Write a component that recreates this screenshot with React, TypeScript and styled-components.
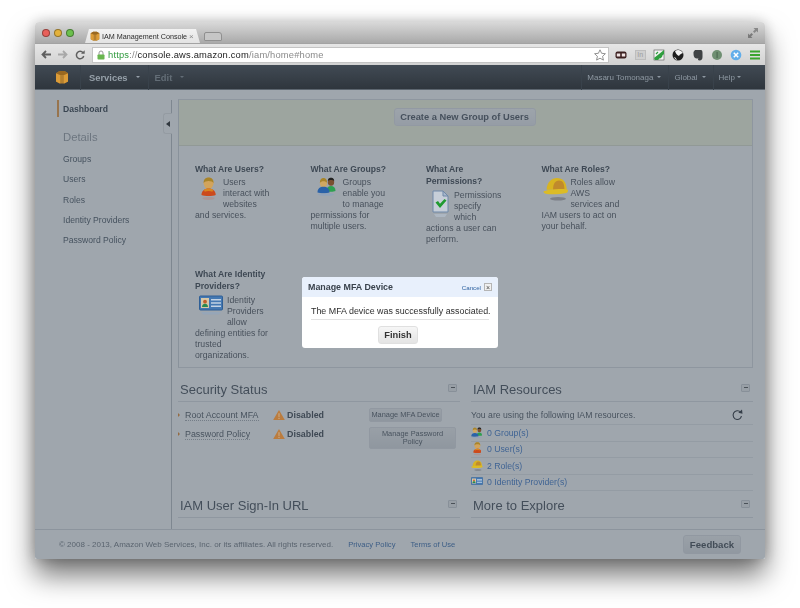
import React from "react";
import styled, { createGlobalStyle, css } from "styled-components";

const GlobalStyle = createGlobalStyle`
  html, body {
    margin: 0;
    padding: 0;
    background: #fff;
    overflow: hidden;
  }
  body {
    font-family: "Liberation Sans", Arial, sans-serif;
  }
`;

// the colour pictures stay saturated under the dim layer in the screenshot
const aboveDim = css`
  position: relative;
  z-index: 2;
`;

const Desktop = styled.div`
  width: 800px;
  height: 608px;
  padding: 22px 35px 0;
  box-sizing: border-box;
  background: #fff;
`;

const Window = styled.div`
  width: 730px;
  height: 537px;
  display: flex;
  flex-direction: column;
  border-radius: 4px 4px 2px 2px;
  overflow: hidden;
  box-shadow: 0 16px 28px rgba(0, 0, 0, 0.55), 0 0 14px rgba(0, 0, 0, 0.22);
  filter: blur(0.3px);
`;

/* browser chrome */
const TitleBar = styled.div`
  height: 21px;
  flex: none;
  display: flex;
  align-items: flex-end;
  padding: 0 7px 0 7px;
  background: linear-gradient(#d9d9d9, #a9a9a9);
`;

const Light = styled.span<{ $color: string }>`
  width: 8px;
  height: 8px;
  margin-right: 4px;
  box-sizing: border-box;
  border-radius: 50%;
  border: 0.5px solid rgba(0, 0, 0, 0.35);
  background: ${({ $color }) => $color};
`;

const Lights = styled.div`
  display: flex;
  align-self: center;
  margin-left: 0;
  margin-right: 7px;
`;

const Tab = styled.div`
  width: 115px;
  height: 14px;
  display: flex;
  align-items: center;
  gap: 2px;
  padding: 0 5px 0 5px;
  box-sizing: border-box;
  clip-path: polygon(0 100%, 4px 0, calc(100% - 4px) 0, 100% 100%);
  background: linear-gradient(#f2f2f2, #e3e3e3);
  font-size: 7.2px;
  color: #2c2c2c;
  white-space: nowrap;
  svg {
    flex: none;
  }
`;

const TabClose = styled.span`
  margin-left: auto;
  margin-right: 3px;
  font-size: 8px;
  color: #888;
`;

const NewTab = styled.div`
  width: 18px;
  height: 9px;
  margin: 0 0 2px 4px;
  border: 1px solid #8f8f8f;
  border-radius: 2px 3px 1px 1px;
  background: #c6c6c6;
  box-sizing: border-box;
`;

const FullScreen = styled.div`
  margin-left: auto;
  align-self: flex-start;
  margin-top: 6px;
  display: flex;
`;

const Toolbar = styled.div`
  height: 22px;
  flex: none;
  display: flex;
  align-items: center;
  padding: 0 4px 0 2px;
  box-sizing: border-box;
  background: linear-gradient(#e6e6e6, #d2d2d2);
  border-top: 1px solid #a3a3a3;
`;

const ToolButton = styled.div`
  width: 17px;
  display: flex;
  justify-content: center;
  flex: none;
`;

const AddressBar = styled.div`
  width: 517px;
  height: 16px;
  margin-left: 4px;
  margin-right: 3px;
  display: flex;
  align-items: center;
  gap: 3px;
  padding: 0 2px 0 4px;
  box-sizing: border-box;
  background: #fff;
  border: 1px solid #c4c4c4;
  flex: none;
  font-size: 9.35px;
  letter-spacing: 0.18px;
`;

const Url = styled.span`
  color: #8a8a8a;
  white-space: nowrap;
  b {
    font-weight: 400;
    color: #222;
  }
  i {
    font-style: normal;
    color: #2f9a3d;
  }
`;

const StarSlot = styled.span`
  margin-left: auto;
  display: flex;
`;

const Extensions = styled.div`
  flex: 1;
  display: flex;
  justify-content: space-between;
  align-items: center;
  padding: 0 0 0 3px;
`;

const Extension = styled.div`
  width: 12px;
  height: 12px;
  display: flex;
  align-items: center;
  justify-content: center;
  font-size: 7px;
  color: #9c9c9c;
`;

/* AWS nav */
const NavBar = styled.div`
  height: 25px;
  flex: none;
  display: flex;
  align-items: center;
  padding: 0 17px 0 20px;
  box-sizing: border-box;
  background: linear-gradient(#414a54, #2f363d);
  border-bottom: 1px solid #5d666f;
`;

const NavLogo = styled.div`
  width: 25px;
  display: flex;
`;

const NavItem = styled.div<{ $bold?: boolean; $faint?: boolean; $gap?: number; $pad?: string }>`
  height: 25px;
  display: flex;
  align-items: center;
  gap: ${({ $gap }) => $gap ?? 4}px;
  padding: ${({ $pad }) => $pad ?? "0 7px 0 5px"};
  border-left: 1px solid #39424b;
  font-size: ${({ $bold }) => ($bold ? 9.4 : 8)}px;
  font-weight: ${({ $bold }) => ($bold ? 700 : 400)};
  color: ${({ $faint, $bold }) => ($faint ? "#636d76" : $bold ? "#96a0a9" : "#8e98a2")};
  white-space: nowrap;
`;

const Caret = styled.span`
  width: 0;
  height: 0;
  border-left: 2.5px solid transparent;
  border-right: 2.5px solid transparent;
  border-top: 2.5px solid currentColor;
`;

const NavRight = styled.div`
  margin-left: auto;
  display: flex;
`;

/* dimmed page */
const Page = styled.div`
  position: relative;
  flex: 1;
  min-height: 0;
  display: flex;
  flex-direction: column;
  background: #fff;
`;

const Overlay = styled.div`
  position: absolute;
  inset: 0;
  z-index: 1;
  display: flex;
  justify-content: center;
  align-items: flex-start;
  padding-top: 187px;
  background: rgba(64, 77, 92, 0.5);
`;

const Modal = styled.div`
  width: 196px;
  height: 71px;
  border-radius: 3px;
  background: #fff;
  overflow: hidden;
  display: flex;
  flex-direction: column;
`;

const ModalHead = styled.div`
  height: 20px;
  flex: none;
  display: flex;
  align-items: center;
  padding: 0 6px;
  background: #e8f0fc;
  font-size: 8.9px;
  font-weight: 700;
  color: #39424c;
`;

const ModalCancel = styled.span`
  margin-left: auto;
  font-size: 6.2px;
  font-weight: 400;
  color: #2b5f9e;
`;

const ModalClose = styled.span`
  width: 8px;
  height: 8px;
  margin-left: 3px;
  border: 0.5px solid #b5b5b5;
  background: #f0f0f0;
  box-sizing: border-box;
  display: flex;
  align-items: center;
  justify-content: center;
  font-size: 7px;
  font-weight: 400;
  line-height: 1;
  color: #444;
`;

const ModalText = styled.div`
  margin: 0 9px;
  padding: 9px 0 2px;
  text-align: center;
  font-size: 8.9px;
  line-height: 11px;
  color: #2e2e2e;
  white-space: nowrap;
  border-bottom: 1px solid #e2e2e2;
`;

const FinishButton = styled.div`
  align-self: center;
  width: 40px;
  height: 18px;
  margin: 6px 4px 0 0;
  display: flex;
  align-items: center;
  justify-content: center;
  border-radius: 3px;
  background: linear-gradient(#f6f6f6, #e4e4e4);
  border: 1px solid #e0e0e0;
  box-sizing: border-box;
  font-size: 9.3px;
  font-weight: 700;
  color: #333;
`;

const Body = styled.div`
  flex: 1;
  min-height: 0;
  display: flex;
`;

const Sidebar = styled.div`
  position: relative;
  width: 137px;
  flex: none;
  box-sizing: border-box;
  margin-top: 10px;
  padding: 0 0 0 22px;
  border-right: 1px solid #bcc0c4;
`;

const Collapse = styled.div`
  position: absolute;
  right: -1px;
  top: 13px;
  width: 9px;
  height: 21px;
  display: flex;
  align-items: center;
  justify-content: center;
  border-radius: 3px 0 0 3px;
  background: #fff;
  border: 1px solid #e9e9e9;
  border-right: none;
  box-sizing: border-box;
  &::before {
    content: "";
    border-top: 3px solid transparent;
    border-bottom: 3px solid transparent;
    border-right: 4px solid #222;
  }
`;

const SideActive = styled.div`
  height: 17px;
  display: flex;
  align-items: center;
  padding-left: 4px;
  border-left: 2px solid #f09a3e;
  font-size: 8.6px;
  font-weight: 700;
  color: #333c46;
`;

const SideHeading = styled.div`
  margin: 13px 0 5px 6px;
  font-size: 11.3px;
  line-height: 14px;
  color: #9a9ea4;
`;

const SideLink = styled.div`
  height: 20.3px;
  display: flex;
  align-items: center;
  margin-left: 6px;
  font-size: 8.6px;
  color: #4a5560;
`;

const Content = styled.div`
  flex: 1;
  min-width: 0;
  padding: 9px 12px 0 6px;
  overflow: hidden;
`;

const Panel = styled.div`
  height: 269px;
  box-sizing: border-box;
  border: 1px solid #dcdfe3;
  border-left-color: #d3d6da;
  background: #fff;
`;

const Band = styled.div`
  height: 46px;
  display: flex;
  justify-content: center;
  padding: 8px 2px 0 0;
  box-sizing: border-box;
  background: #fbfde3;
  border-bottom: 1px solid #e3e5d0;
`;

const CreateButton = styled.div`
  width: 142px;
  height: 18px;
  display: flex;
  align-items: center;
  justify-content: center;
  border-radius: 3px;
  background: linear-gradient(#fafafa, #ececf0);
  border: 1px solid #e4e4ea;
  box-sizing: border-box;
  font-size: 9.3px;
  font-weight: 700;
  color: #4c535d;
`;

const Topics = styled.div`
  display: grid;
  grid-template-columns: repeat(4, 115.5px);
  grid-auto-rows: 105px;
  padding: 17px 0 0 16px;
`;

const Topic = styled.div<{ $width: number }>`
  width: ${({ $width }) => $width}px;
  font-size: 8.7px;
  line-height: 11px;
  color: #4f535b;
`;

const TopicTitle = styled.div`
  font-size: 8.6px;
  font-weight: 700;
  line-height: 12.4px;
  width: 110px;
  margin-bottom: 2px;
  color: #3c434c;
  white-space: pre-line;
`;

const TopicIcon = styled.div<{ $w: number }>`
  ${aboveDim}
  float: left;
  width: ${({ $w }) => $w}px;
  height: 33px;
  display: flex;
  justify-content: center;
`;

const Sections = styled.div`
  display: grid;
  grid-template-columns: 282px 282px;
  grid-template-rows: 116px auto;
  column-gap: 11px;
  margin-top: 10px;
`;

const SectionHead = styled.div`
  height: 24px;
  display: flex;
  align-items: center;
  padding: 1px 3px 1px 2px;
  box-sizing: border-box;
  border-bottom: 1px solid #dfe1e4;
  font-size: 13px;
  color: #474e58;
`;

const Minus = styled.span`
  margin-left: auto;
  margin-top: -4px;
  width: 9px;
  height: 8px;
  display: flex;
  align-items: center;
  justify-content: center;
  border-radius: 1px;
  border: 1px solid #d0d3d7;
  box-sizing: border-box;
  background: #f0f0f0;
  &::before {
    content: "";
    width: 4px;
    height: 1px;
    background: #555;
  }
`;

const StatusGrid = styled.div`
  display: grid;
  grid-template-columns: 95px 96px 1fr;
  row-gap: 5px;
  padding-top: 6px;
  font-size: 8.9px;
`;

const StatusLabel = styled.div`
  height: 14px;
  display: flex;
  align-items: center;
  gap: 5px;
  color: #505760;
  &::before {
    content: "";
    border-top: 2px solid transparent;
    border-bottom: 2px solid transparent;
    border-left: 2.5px solid #e9892b;
  }
  span {
    border-bottom: 1px dotted #a8adb3;
    white-space: nowrap;
  }
`;

const StatusValue = styled.div`
  height: 14px;
  display: flex;
  align-items: center;
  gap: 2px;
  font-weight: 700;
  color: #3c434c;
  svg {
    ${aboveDim}
  }
`;

const StatusButton = styled.div<{ $w: number }>`
  width: ${({ $w }) => $w}px;
  padding: 1.5px 8px;
  min-height: 14px;
  display: flex;
  align-items: center;
  justify-content: center;
  box-sizing: border-box;
  text-align: center;
  border-radius: 2px;
  background: linear-gradient(#f2f2f2, #dfe0e3);
  border: 1px solid #e2e3e6;
  font-size: 7.4px;
  line-height: 8.5px;
  color: #505760;
`;

const SingleLine = styled.span`
  margin: 0 -8px;
  white-space: nowrap;
`;

const ResourceIntro = styled.div`
  height: 23px;
  display: flex;
  align-items: center;
  justify-content: space-between;
  padding: 3px 10px 0 0;
  box-sizing: border-box;
  border-bottom: 1px solid #e8eaec;
  font-size: 8.7px;
  color: #505760;
`;

const ResourceRow = styled.div`
  height: 16.5px;
  display: flex;
  align-items: center;
  gap: 4px;
  box-sizing: border-box;
  border-bottom: 1px solid #e8eaec;
  font-size: 8.7px;
  color: #3f79cb;
`;

const RowIcon = styled.span`
  ${aboveDim}
  width: 12px;
  display: flex;
  justify-content: center;
  flex: none;
`;

const Footer = styled.div`
  height: 30px;
  flex: none;
  display: flex;
  align-items: center;
  padding: 0 24px;
  box-sizing: border-box;
  border-top: 1px solid #d8dbdf;
  font-size: 8px;
  color: #737981;
  white-space: nowrap;
`;

const FooterLink = styled.span`
  margin-left: 15px;
  font-size: 7.6px;
  color: #3a6daf;
`;

const Feedback = styled.div`
  margin-left: auto;
  width: 58px;
  height: 19px;
  display: flex;
  align-items: center;
  justify-content: center;
  border-radius: 3px;
  background: linear-gradient(#f4f4f4, #e2e3e6);
  border: 1px solid #e2e3e6;
  box-sizing: border-box;
  font-size: 9.6px;
  font-weight: 700;
  color: #444a52;
`;

/* drawings */
const Cube = ({ size }: { size: number }) => (
  <svg width={size} height={size} viewBox="0 0 14 14">
    <path d="M1 3.2 4.500 1h5L13 3.200v8.300L9.500 13.500h-5L1 11.500z" fill="#b5802f" />
    <path d="M1 3.200 5.200 5v8.400L1 11.500zM13 3.200 8.800 5v8.400l4.200-1.900z" fill="#dc9c38" />
    <path d="M4.500 1h5L13 3.200 8.800 5H5.200L1 3.200z" fill="#9a6820" />
  </svg>
);

const Person = ({ size }: { size: number }) => (
  <svg width={size * 0.8} height={size * 1.25} viewBox="0 0 16 25">
    <ellipse cx="8" cy="6.500" rx="5.200" ry="6" fill="#d2a45c" />
    <path d="M2.800 6.500C2.600 1.200 6 .4 8 .4s5.400.8 5.200 6.100C12 3.400 4 3.400 2.800 6.500z" fill="#a8842a" />
    <path d="M.5 19c0-4.500 3.500-6.800 7.500-6.800s7.500 2.300 7.500 6.800c-3 1.400-12 1.400-15 0z" fill="#cc4a1c" />
    <path d="M3 13.500c2.500-1.700 7.500-1.700 10 0l-1 2c-2-1-6-1-8 0z" fill="#d9851f" />
    <ellipse cx="8" cy="22.500" rx="6.500" ry="1.600" fill="#b0908c" opacity="0.7" />
  </svg>
);

const Group = ({ size }: { size: number }) => (
  <svg width={size} height={size * 0.95} viewBox="0 0 20 19">
    <ellipse cx="14" cy="5" rx="3.200" ry="3.800" fill="#7a5030" />
    <path d="M10.800 4C11 1 13 .8 14 .8s3.200.5 3.200 3.200c-1.400-1.300-5-1.300-6.400 0z" fill="#222" />
    <path d="M9.500 14c0-3.400 1.800-5 4.500-5s4.500 1.600 4.500 5c-2 1-7 1-9 0z" fill="#2ea050" />
    <ellipse cx="6.500" cy="6" rx="3.600" ry="4.200" fill="#cfa862" />
    <path d="M2.900 6C2.800 2 5 1 6.500 1s3.700 1 3.600 5C9 3.800 4 3.800 2.900 6z" fill="#a8852a" />
    <path d="M.5 15.500c0-4 2.500-5.700 6-5.700s6 1.700 6 5.700c-2.500 1-9.500 1-12 0z" fill="#2a62a8" />
    <ellipse cx="9" cy="17.500" rx="8" ry="1.300" fill="#8fa2bc" opacity="0.8" />
  </svg>
);

const Permission = () => (
  <svg width="17" height="28" viewBox="0 0 17 28">
    <path d="M1 1h10l5 5v16H1z" fill="#c6ced8" stroke="#6f88a8" />
    <path d="M11 1v5h5z" fill="#a8b8cc" stroke="#6f88a8" />
    <path d="M3.500 12.500 6 11l2 2.800L12.500 9l2 1.500L8 18z" fill="#1f9a30" />
    <path d="M2 24h13l-2 3H4z" fill="#b4bfca" opacity="0.7" />
  </svg>
);

const Hat = ({ size }: { size: number }) => (
  <svg width={size} height={size * 0.95} viewBox="0 0 26 25">
    <path d="M3.500 13C3.500 5.500 8.500 1 14 1s9.800 3.500 9.800 12z" fill="#d8b422" />
    <path d="M10 13C10 7 12 3.500 16 3.500s5.500 3 5.500 9.500z" fill="#c08a2c" />
    <path d="M.5 14.500C4 12.500 22 11 25 13c.7 1.500-.5 3-1.500 3.300-6 1.200-16 1.700-21 .700C.900 16.500.2 15.500.5 14.500z" fill="#dcbc26" />
    <ellipse cx="15" cy="22" rx="8" ry="1.800" fill="#73777e" opacity="0.8" />
  </svg>
);

const IdCard = ({ w, h }: { w: number; h: number }) => (
  <svg width={w} height={h} viewBox="0 0 24 20">
    <rect x="0.500" y="1" width="23" height="14" rx="1" fill="#4478b2" stroke="#2f5f96" />
    <rect x="2" y="3" width="8" height="10" fill="#d8c8a8" />
    <circle cx="6" cy="6.700" r="1.900" fill="#c2602a" />
    <path d="M3 12c0-2.500 1.500-3.300 3-3.300s3 .8 3 3.300z" fill="#2a8a50" />
    <path d="M12 4h10v1.500H12zM12 7.200h10v1.500H12zM12 10.400h10v1.500H12z" fill="#c2d2e4" />
    <path d="M2 17h20l-2 2.500H4z" fill="#93a6bc" opacity="0.7" />
  </svg>
);

const Warning = () => (
  <svg width="12" height="12" viewBox="0 0 13 12">
    <path d="M6.500.5 12.800 11.500H.2z" fill="#bb7c3e" />
    <path d="M6 4h1l-.1 4.500h-.8zM6 9.200h1v1H6z" fill="#d8c8b0" opacity="0.8" />
  </svg>
);

const Refresh = () => (
  <svg width="12" height="12" viewBox="0 0 12 12" fill="none">
    <path d="M9.800 3.200A4.400 4.400 0 1 0 6 10.500 4.400 4.400 0 0 0 10.400 7" stroke="#2b2f36" strokeWidth="1.100" />
    <path d="M7.300 3.800 11.500 4.800 11 .6z" fill="#2b2f36" />
  </svg>
);

const Lock = () => (
  <svg width="8" height="10" viewBox="0 0 8 10">
    <path d="M2 5V3a2 2 0 0 1 4 0v2" fill="none" stroke="#9a9a9a" />
    <rect x="0.500" y="4.500" width="7" height="5" rx="0.800" fill="#69b64f" />
  </svg>
);

const Star = () => (
  <svg width="12" height="12" viewBox="0 0 12 12">
    <path d="M6 .8 7.600 4.300l3.800.4-2.800 2.600.8 3.800L6 9.200l-3.400 1.900.8-3.800L.6 4.700l3.800-.4z" fill="#fff" stroke="#777" strokeWidth="0.800" />
  </svg>
);

const BackArrow = ({ color }: { color: string }) => (
  <svg width="10" height="9" viewBox="0 0 10 9" fill="none">
    <path d="M10 4.500H2M5 1 1.500 4.500 5 8" stroke={color} strokeWidth="1.800" />
  </svg>
);

const ForwardArrow = ({ color }: { color: string }) => (
  <svg width="10" height="9" viewBox="0 0 10 9" fill="none">
    <path d="M0 4.500h8M5 1l3.500 3.500L5 8" stroke={color} strokeWidth="1.800" />
  </svg>
);

const Reload = () => (
  <svg width="10" height="10" viewBox="0 0 10 10" fill="none">
    <path d="M8 2.700A3.700 3.700 0 1 0 8.700 6" stroke="#5f5f5f" strokeWidth="1.500" />
    <path d="M6 3.800h3.700V.2z" fill="#5f5f5f" />
  </svg>
);

const Expand = () => (
  <svg width="10" height="10" viewBox="0 0 10 10">
    <path d="M5.500 0H10v4.500L8.500 3 6.500 5 5 3.500 7 1.500z" fill="#888" />
    <path d="M0 10V5.500L1.500 7 3.500 5 5 6.500l-2 2L4.500 10z" fill="#7a7a7a" />
  </svg>
);

const Ghost = () => (
  <svg width="12" height="8" viewBox="0 0 12 8">
    <rect x="0.500" y="0.500" width="11" height="7" rx="2" fill="#3c2020" />
    <rect x="1.800" y="2.500" width="3.400" height="3" fill="#f0e4e4" />
    <rect x="6.800" y="2.500" width="3.400" height="3" fill="#f0e4e4" />
  </svg>
);

const Shield = () => (
  <svg width="12" height="12" viewBox="0 0 12 12">
    <rect x="1" y="1" width="10" height="10" fill="#f4f4f4" stroke="#555" strokeWidth="0.600" />
    <path d="M1 9 6 5l5-4v4L5 11H2z" fill="#2f9e3f" />
    <path d="M3 5 5 3M7 9l2-2" stroke="#2f9e3f" strokeWidth="1.200" />
  </svg>
);

const Globe = () => (
  <svg width="12" height="12" viewBox="0 0 12 12">
    <circle cx="6" cy="6" r="5.500" fill="#1e1e1e" />
    <path d="M3 2c3-2 6-1 8 2-2 1-3 1-4 3-2-1-3-2-4-5zM2 8c1 0 2 1 3 3-1 0-2-1-3-3z" fill="#f4f4f4" />
  </svg>
);

const Elephant = () => (
  <svg width="10" height="12" viewBox="0 0 10 12">
    <path d="M2 1h6c1 0 1.500 1 1.500 3v4c0 2-1 3.500-3 3.500-1.500 0-2-1-1-2H4C2 9.500.5 8 .5 5V3z" fill="#3f4244" />
  </svg>
);

const GreyDot = () => (
  <svg width="12" height="12" viewBox="0 0 12 12">
    <circle cx="6" cy="6" r="5" fill="#6f8f72" />
    <path d="M5.500 3h1.200v6H5.500z" fill="#4e6a52" />
  </svg>
);

const BlueDot = () => (
  <svg width="12" height="12" viewBox="0 0 12 12">
    <circle cx="6" cy="6" r="5.300" fill="#62aeea" />
    <path d="M3.800 3.800l4.400 4.400M8.200 3.800 3.800 8.200" stroke="#fff" strokeWidth="1.500" />
  </svg>
);

const Menu = () => (
  <svg width="10" height="10" viewBox="0 0 10 10">
    <path d="M0 .5h10v2H0zM0 4h10v2H0zM0 7.500h10v2H0z" fill="#3aa52f" />
  </svg>
);

const InBox = styled.span`
  width: 11px;
  height: 10px;
  display: flex;
  align-items: center;
  justify-content: center;
  border: 1px solid #bdbdbd;
  background: #cfcfcf;
  box-sizing: border-box;
`;

const topics = [
  { title: "What Are Users?", icon: <Person size={19} />, w: 28, width: 78, text: "Users interact with websites and services." },
  { title: "What Are Groups?", icon: <Group size={20} />, w: 32, width: 84, text: "Groups enable you to manage permissions for multiple users." },
  { title: "What Are\nPermissions?", icon: <Permission />, w: 28, width: 78, text: "Permissions specify which actions a user can perform." },
  { title: "What Are Roles?", icon: <Hat size={26} />, w: 29, width: 80, text: "Roles allow AWS services and IAM users to act on your behalf." },
  { title: "What Are Identity\nProviders?", icon: <IdCard w={24} h={20} />, w: 32, width: 80, text: "Identity Providers allow defining entities for trusted organizations." },
];

const App = () => (
  <Desktop>
    <GlobalStyle />
    <Window>
      <TitleBar>
        <Lights>
          <Light $color="#e8605a" />
          <Light $color="#e4b23c" />
          <Light $color="#6cc04d" />
        </Lights>
        <Tab>
          <Cube size={10} />
          IAM Management Console
          <TabClose>×</TabClose>
        </Tab>
        <NewTab />
        <FullScreen>
          <Expand />
        </FullScreen>
      </TitleBar>
      <Toolbar>
        <ToolButton><BackArrow color="#5f5f5f" /></ToolButton>
        <ToolButton><ForwardArrow color="#a8a8a8" /></ToolButton>
        <ToolButton><Reload /></ToolButton>
        <AddressBar>
          <Lock />
          <Url><i>https</i>://<b>console.aws.amazon.com</b>/iam/home#home</Url>
          <StarSlot><Star /></StarSlot>
        </AddressBar>
        <Extensions>
          <Extension><Ghost /></Extension>
          <Extension><InBox>In</InBox></Extension>
          <Extension><Shield /></Extension>
          <Extension><Globe /></Extension>
          <Extension><Elephant /></Extension>
          <Extension><GreyDot /></Extension>
          <Extension><BlueDot /></Extension>
          <Extension><Menu /></Extension>
        </Extensions>
      </Toolbar>
      <NavBar>
        <NavLogo><Cube size={14} /></NavLogo>
        <NavItem $bold $gap={8} $pad="0 8px 0 8px">Services<Caret /></NavItem>
        <NavItem $bold $faint $gap={8} $pad="0 0 0 6px">Edit<Caret /></NavItem>
        <NavRight>
          <NavItem>Masaru Tomonaga<Caret /></NavItem>
          <NavItem>Global<Caret /></NavItem>
          <NavItem $gap={2}>Help<Caret /></NavItem>
        </NavRight>
      </NavBar>
      <Page>
        <Body>
          <Sidebar>
            <Collapse />
            <SideActive>Dashboard</SideActive>
            <SideHeading>Details</SideHeading>
            <SideLink>Groups</SideLink>
            <SideLink>Users</SideLink>
            <SideLink>Roles</SideLink>
            <SideLink>Identity Providers</SideLink>
            <SideLink>Password Policy</SideLink>
          </Sidebar>
          <Content>
            <Panel>
              <Band>
                <CreateButton>Create a New Group of Users</CreateButton>
              </Band>
              <Topics>
                {topics.map((topic) => (
                  <Topic key={topic.title} $width={topic.width}>
                    <TopicTitle>{topic.title}</TopicTitle>
                    <TopicIcon $w={topic.w}>{topic.icon}</TopicIcon>
                    {topic.text}
                  </Topic>
                ))}
              </Topics>
            </Panel>
            <Sections>
              <div>
                <SectionHead>Security Status<Minus /></SectionHead>
                <StatusGrid>
                  <StatusLabel><span>Root Account MFA</span></StatusLabel>
                  <StatusValue><Warning /> Disabled</StatusValue>
                  <StatusButton $w={73}><SingleLine>Manage MFA Device</SingleLine></StatusButton>
                  <StatusLabel><span>Password Policy</span></StatusLabel>
                  <StatusValue><Warning /> Disabled</StatusValue>
                  <StatusButton $w={87}>Manage Password Policy</StatusButton>
                </StatusGrid>
              </div>
              <div>
                <SectionHead>IAM Resources<Minus /></SectionHead>
                <ResourceIntro>
                  You are using the following IAM resources.
                  <Refresh />
                </ResourceIntro>
                <ResourceRow><RowIcon><Group size={12} /></RowIcon>0 Group(s)</ResourceRow>
                <ResourceRow><RowIcon><Person size={11} /></RowIcon>0 User(s)</ResourceRow>
                <ResourceRow><RowIcon><Hat size={12} /></RowIcon>2 Role(s)</ResourceRow>
                <ResourceRow><RowIcon><IdCard w={12} h={10} /></RowIcon>0 Identity Provider(s)</ResourceRow>
              </div>
              <div>
                <SectionHead>IAM User Sign-In URL<Minus /></SectionHead>
              </div>
              <div>
                <SectionHead>More to Explore<Minus /></SectionHead>
              </div>
            </Sections>
          </Content>
        </Body>
        <Footer>
          © 2008 - 2013, Amazon Web Services, Inc. or its affiliates. All rights reserved.
          <FooterLink>Privacy Policy</FooterLink>
          <FooterLink>Terms of Use</FooterLink>
          <Feedback>Feedback</Feedback>
        </Footer>
        <Overlay>
          <Modal>
            <ModalHead>
              Manage MFA Device
              <ModalCancel>Cancel</ModalCancel>
              <ModalClose>×</ModalClose>
            </ModalHead>
            <ModalText>The MFA device was successfully associated.</ModalText>
            <FinishButton>Finish</FinishButton>
          </Modal>
        </Overlay>
      </Page>
    </Window>
  </Desktop>
);

export default App;
